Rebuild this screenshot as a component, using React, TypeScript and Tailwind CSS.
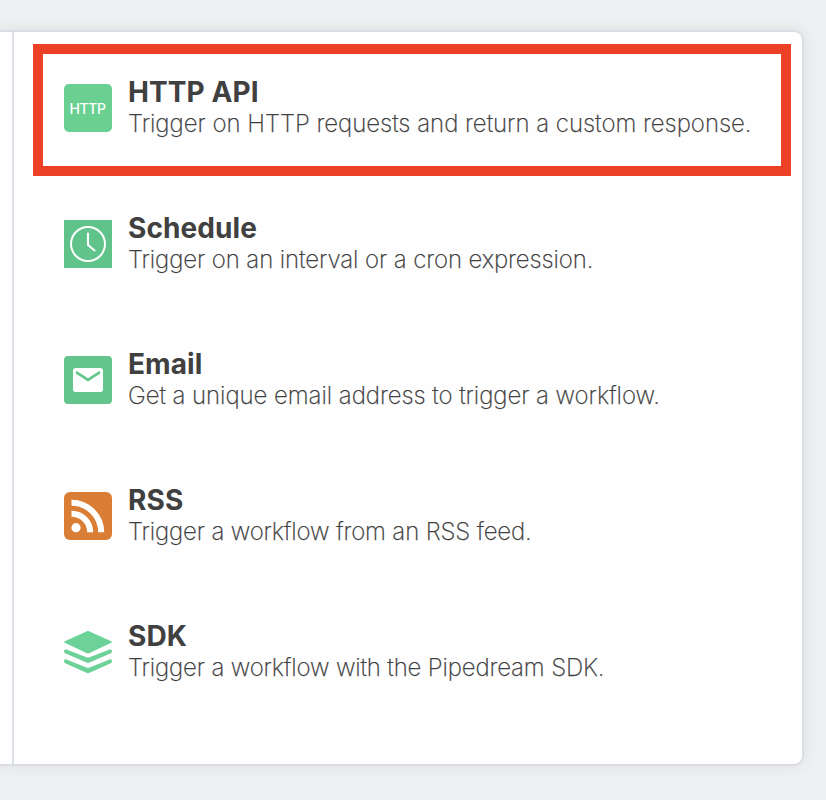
import type { ReactNode } from "react";

function HttpIcon() {
  return (
    <div className="flex size-12 items-center justify-center rounded-[5px] bg-[#6ad092] pt-0.5 pr-px text-[14px] leading-none font-medium tracking-[-0.4px] text-white">
      HTTP
    </div>
  );
}

function ClockIcon() {
  return (
    <svg viewBox="0 0 48 48" className="size-12 bg-[#60c389]" fill="none" stroke="white" strokeLinecap="round" strokeLinejoin="round">
      <circle cx="24" cy="24" r="17" strokeWidth="2" />
      <path d="M24 13.5V25L30.5 30.5" strokeWidth="2.1" />
    </svg>
  );
}

function MailIcon() {
  return (
    <svg viewBox="0 0 48 48" className="size-12 rounded-[4px] bg-[#64c58b]" fill="none">
      <rect x="9" y="12" width="30" height="24" rx="2.8" fill="white" />
      <path d="M12 16.2L24 23.8L36 16.2" stroke="#64c58b" strokeWidth="2.7" />
    </svg>
  );
}

function RssIcon() {
  return (
    <svg viewBox="0 0 48 48" className="size-12 rounded-[6px] bg-[#db7e35]" fill="none" stroke="white" strokeWidth="6">
      <circle cx="12" cy="35.7" r="4.6" fill="white" stroke="none" />
      <path d="M7.5 21.7A18.5 18.5 0 0 1 26.2 40.3" />
      <path d="M7.5 10.7A29.6 29.6 0 0 1 37.2 40.3" />
    </svg>
  );
}

function LayersIcon() {
  return (
    <svg viewBox="0 0 48 48" className="size-12" fill="#6dd298">
      <path d="M22.4 3.4Q24 2.6 25.6 3.4L47.2 13.2Q48.7 14 47.2 14.8L25.6 24.9Q24 25.6 22.4 24.9L.8 14.8Q-.7 14 .8 13.2Z" />
      <path d="M0 23.3Q0 21.1 2.4 21.6L22.4 29.3Q24 30 25.6 29.3L45.6 21.6Q48 21.1 48 23.3Q48 24.6 46.8 25.2L25.6 34.6Q24 35.3 22.4 34.6L1.2 25.2Q0 24.6 0 23.3Z" />
      <path d="M0 33.2Q0 30.8 2.4 31.4L22.4 39.5Q24 40.2 25.6 39.5L45.6 31.4Q48 30.8 48 33.2Q48 34.6 46.8 35.2L25.6 44.8Q24 45.5 22.4 44.8L1.2 35.2Q0 34.6 0 33.2Z" />
    </svg>
  );
}

type Trigger = { title: string; description: string; tracking: string; icon: ReactNode; highlighted?: boolean };

const triggers: Trigger[] = [
  { title: "HTTP API", description: "Trigger on HTTP requests and return a custom response.", tracking: "tracking-[-0.02px]", icon: <HttpIcon />, highlighted: true },
  { title: "Schedule", description: "Trigger on an interval or a cron expression.", tracking: "tracking-[-0.1px]", icon: <ClockIcon /> },
  { title: "Email", description: "Get a unique email address to trigger a workflow.", tracking: "tracking-[-0.06px]", icon: <MailIcon /> },
  { title: "RSS", description: "Trigger a workflow from an RSS feed.", tracking: "tracking-[-0.15px]", icon: <RssIcon /> },
  { title: "SDK", description: "Trigger a workflow with the Pipedream SDK.", tracking: "tracking-[-0.15px]", icon: <LayersIcon /> },
];

function TriggerRow({ title, description, tracking, icon, highlighted }: Trigger) {
  return (
    <li className="relative flex h-[136px] items-center gap-4 pl-[50px]">
      <div className="shrink-0">{icon}</div>
      <div className="whitespace-nowrap text-[#404040]">
        <h2 className="text-[28px] leading-8 font-bold tracking-[0.1px]">{title}</h2>
        <p className={`text-[24px] leading-8 font-extralight [-webkit-text-stroke:0.25px_#404040] ${tracking}`}>{description}</p>
      </div>
      {highlighted && (
        <div className="pointer-events-none absolute top-1 right-[11px] bottom-0 left-[19px] border-[10px] border-[#ec4027]" />
      )}
    </li>
  );
}

export default function App() {
  return (
    <main className="h-[800px] w-[826px] overflow-hidden bg-[#eff0f2] pt-[30px] font-['Inter',sans-serif]">
      <section className="flex h-[736px] w-[804px] rounded-r-[10px] border-y-2 border-r-2 border-[#dadde3] bg-[#fefefe] shadow-[0_0_16px_rgba(0,0,0,0.08)]">
        <div className="w-[14px] border-r-2 border-[#dadfe5]" />
        <ul className="flex-1 pt-2">
          {triggers.map((trigger) => (
            <TriggerRow key={trigger.title} {...trigger} />
          ))}
        </ul>
      </section>
    </main>
  );
}
